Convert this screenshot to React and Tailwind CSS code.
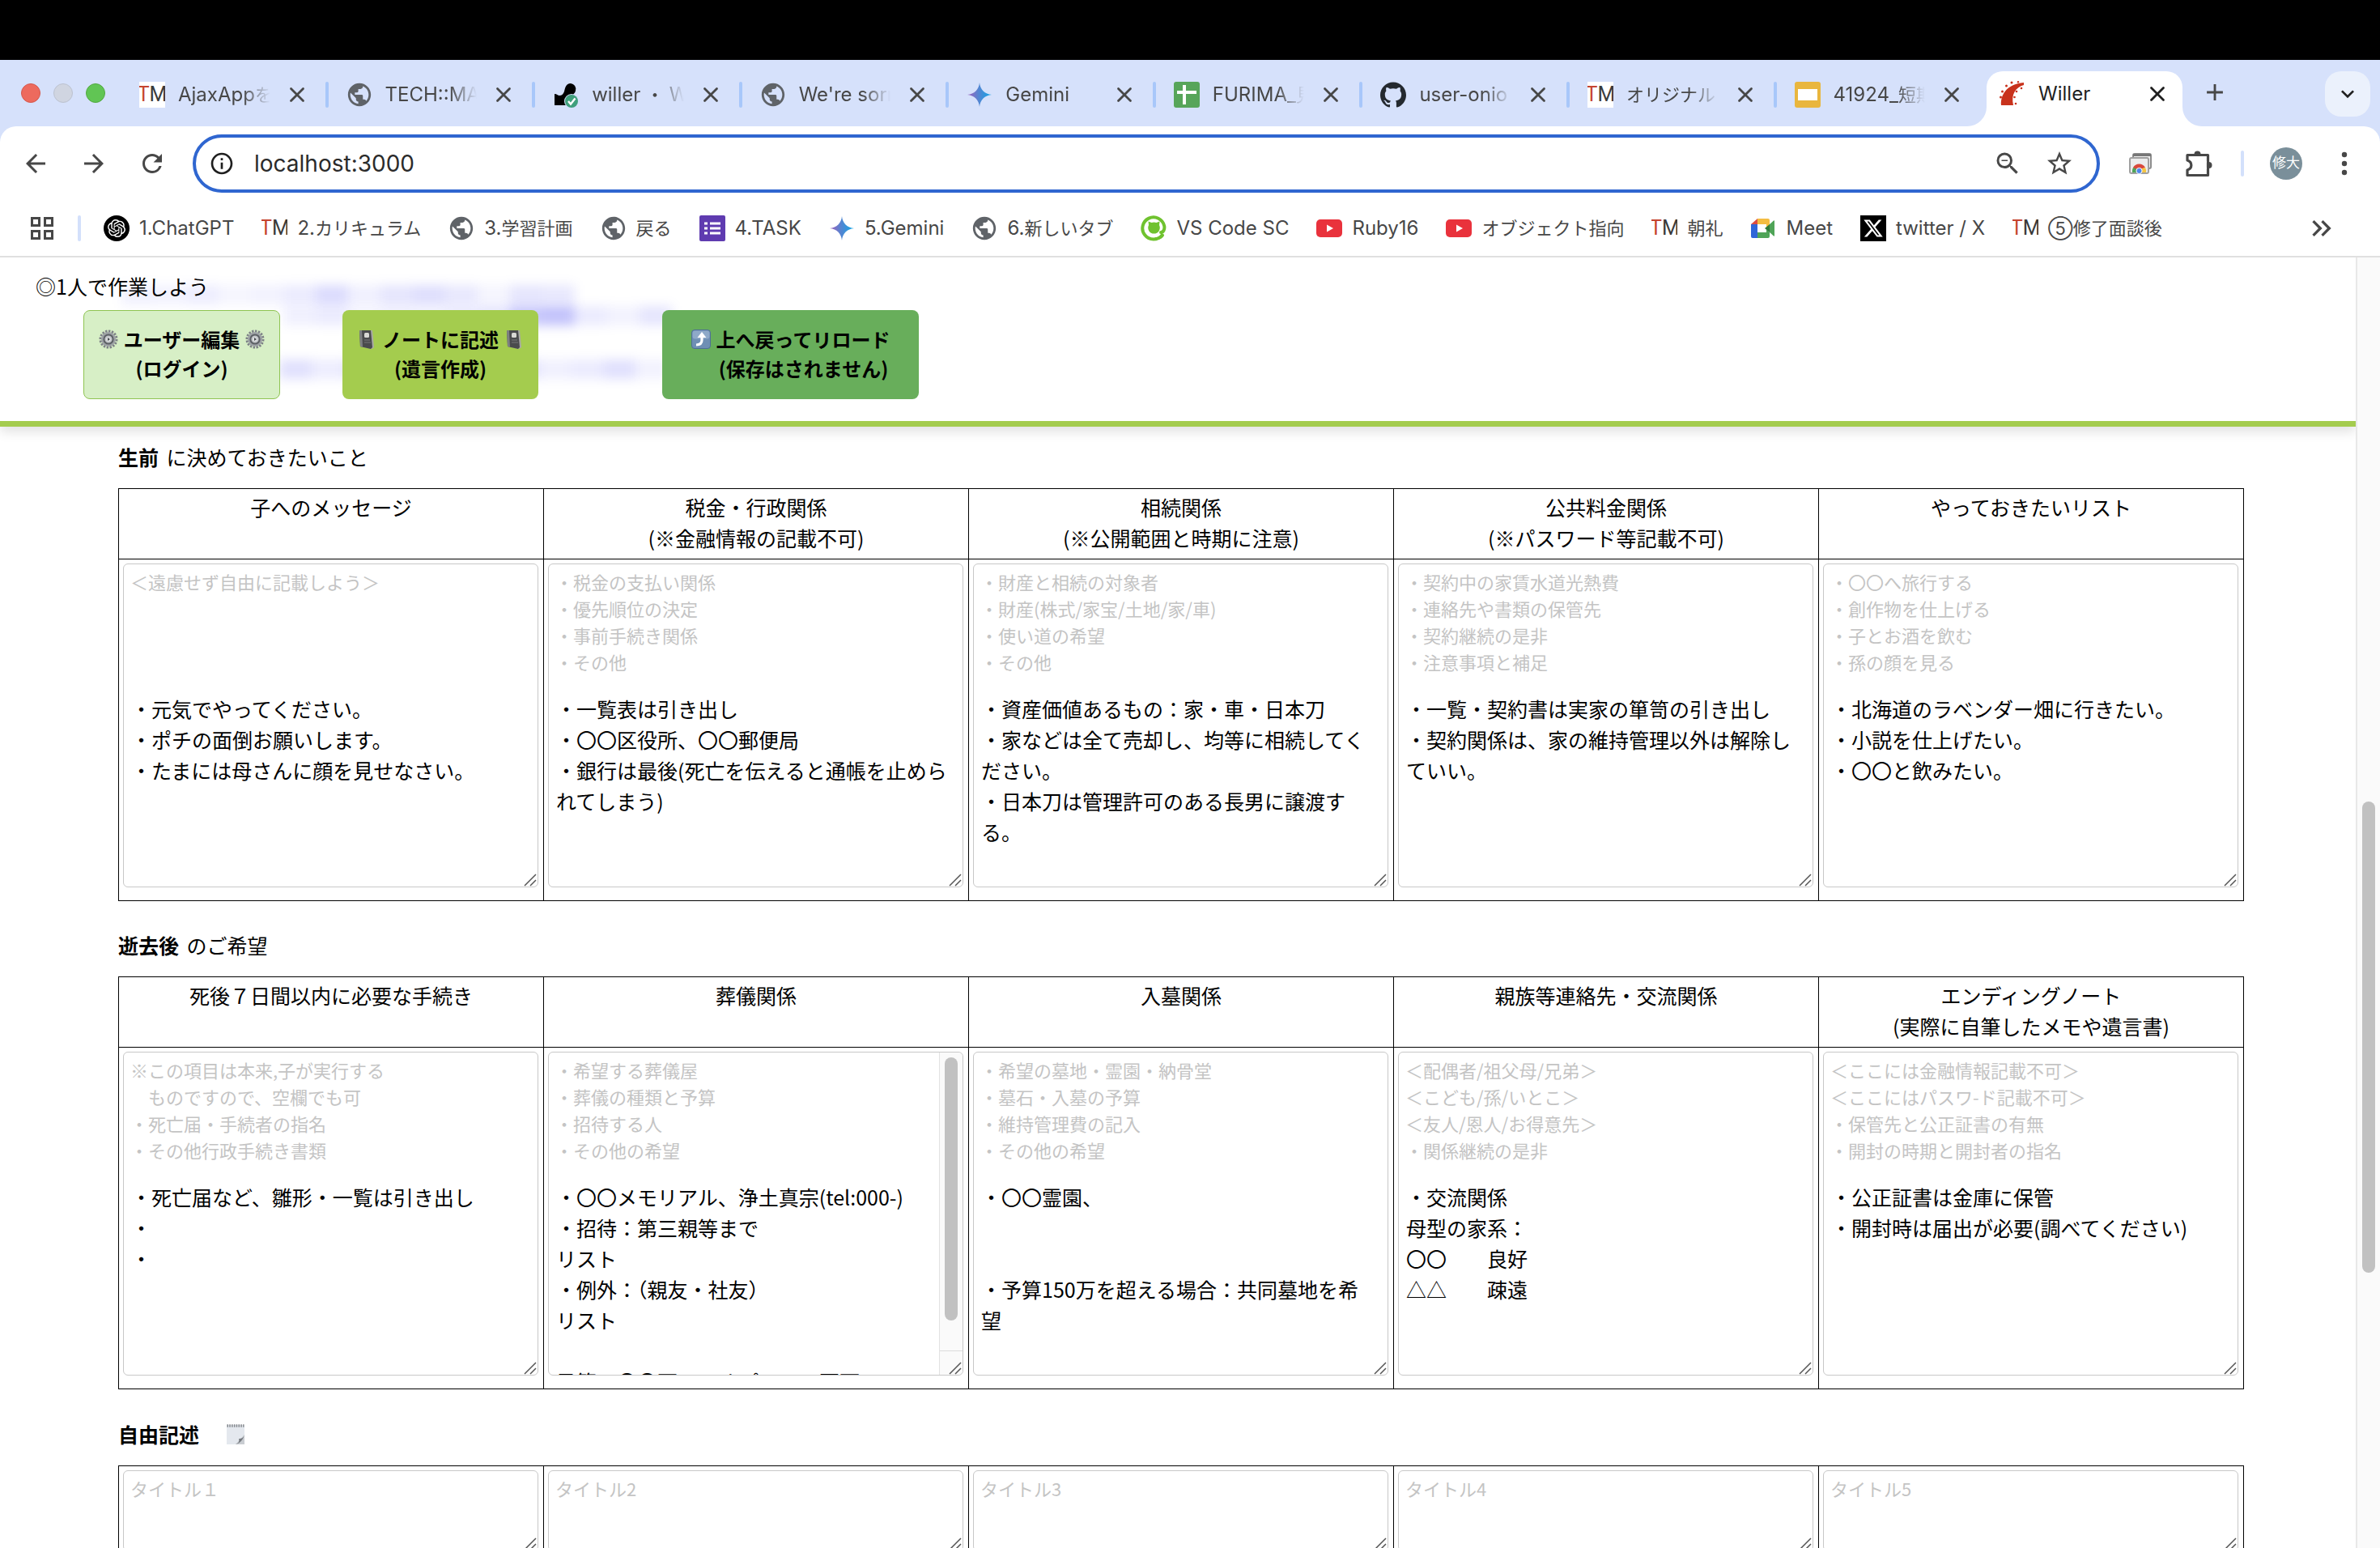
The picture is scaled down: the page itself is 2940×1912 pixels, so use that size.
import React from "react";
import {
  MdArrowBack,
  MdArrowForward,
  MdRefresh,
  MdOutlineInfo,
  MdStarBorder,
  MdZoomOut,
  MdPublic,
  MdAdd,
  MdKeyboardArrowDown,
  MdKeyboardDoubleArrowRight,
} from "react-icons/md";
import { SiOpenai, SiGithub } from "react-icons/si";
import { FaXTwitter } from "react-icons/fa6";
import { X } from "lucide-react";

/* ---------- site icons ---------- */

const Tm = ({ boxed }) => (
  <span
    className={
      "flex size-8 shrink-0 items-center justify-center overflow-hidden font-['Liberation_Sans_Narrow','Roboto',sans-serif] text-[25px] leading-8 " +
      (boxed ? "bg-white" : "")
    }
  >
    <span className="text-[#c5442f]">T</span>
    <span className="text-[#3a3a3a]">M</span>
  </span>
);

const Globe = () => <MdPublic className="size-[34px] shrink-0 text-[#5f6368]" />;

const Gemini = () => (
  <svg viewBox="0 0 32 32" className="size-8 shrink-0">
    <defs>
      <linearGradient id="gem" x1="0" y1="0" x2="1" y2="0">
        <stop offset="0.1" stopColor="#9168c0" />
        <stop offset="0.45" stopColor="#5684d1" />
        <stop offset="0.9" stopColor="#1ba1e3" />
      </linearGradient>
    </defs>
    <path
      fill="url(#gem)"
      d="M16 1C16.6 9.400 22.600 15.400 31 16C22.600 16.600 16.600 22.600 16 31C15.400 22.600 9.400 16.600 1 16C9.400 15.400 15.400 9.400 16 1Z"
    />
  </svg>
);

const Willer = () => (
  <svg viewBox="0 0 32 32" className="size-8 shrink-0">
    <path
      fill="#000"
      d="M22 2a7 7 0 0 1 6 9c-1 5-6 6-9 9-2 2-2 4-2 9H2V15c3 0 4 2 6 2 3 0 5-2 6-5 1-4 2-10 8-10Z"
    />
    <circle cx="23" cy="24" r="9" fill="#d6e1fb" />
    <circle cx="23" cy="24" r="8" fill="#3f9f7c" />
    <path d="M19 24l3 3.500 5.500-7" fill="none" stroke="#fff" strokeWidth="2.400" />
  </svg>
);

const Sheets = () => (
  <svg viewBox="0 0 32 32" className="size-8 shrink-0">
    <rect width="32" height="32" rx="3" fill="#57a55a" />
    <path d="M13 4v24M4 13h24" stroke="#fff" strokeWidth="4" />
  </svg>
);

const Slides = () => (
  <svg viewBox="0 0 32 32" className="size-8 shrink-0">
    <rect width="32" height="32" rx="3" fill="#e9b63e" />
    <rect x="4" y="9" width="24" height="14" fill="#fff" />
  </svg>
);

const Forms = () => (
  <svg viewBox="0 0 32 32" className="size-8 shrink-0">
    <rect width="32" height="32" rx="2" fill="#5f3bb0" />
    <path d="M6 10h4M13 10h13M6 16h4M13 16h13M6 22h4M13 22h13" stroke="#fff" strokeWidth="3" />
  </svg>
);

const Rails = () => (
  <svg viewBox="0 0 32 32" className="size-8 shrink-0">
    <path fill="#c8321c" d="M2 30C1 18 8 4 30 2v3C20 8 14 16 17 30Z" />
    <g fill="#c8321c">
      <circle cx="1.500" cy="20" r="1.500" />
      <circle cx="3.500" cy="13" r="1.500" />
      <circle cx="8.500" cy="6" r="1.500" />
      <circle cx="15" cy="2" r="1.500" />
      <circle cx="23" cy="1.200" r="1.200" />
      <circle cx="27" cy="9" r="1.300" />
      <circle cx="21" cy="13" r="1.300" />
      <circle cx="18.500" cy="20" r="1.300" />
      <circle cx="20" cy="28" r="1.300" />
    </g>
  </svg>
);

const Youtube = () => (
  <svg viewBox="0 0 32 32" className="size-8 shrink-0">
    <rect y="5" width="32" height="22" rx="5" fill="#e9323c" />
    <path d="M13 11.500v9l8-4.500Z" fill="#fff" />
  </svg>
);

const Qiita = () => (
  <svg viewBox="0 0 32 32" className="size-8 shrink-0">
    <path
      d="M26.500 24.500A13.600 13.600 0 1 1 29.200 13c.8 4-1 8-4.200 8"
      fill="none"
      stroke="#6fc22f"
      strokeWidth="4"
      strokeLinecap="round"
    />
    <path
      d="M9.500 7.500l4 1.500q3-1 6 0l4-1.500-.5 4.500a7.300 7.300 0 1 1-13 0Z"
      fill="#6fc22f"
    />
    <path d="M19 28.500q6 .5 8.500-4" fill="none" stroke="#6fc22f" strokeWidth="3" strokeLinecap="round" />
  </svg>
);

const Meet = () => (
  <svg viewBox="0 0 32 32" className="size-8 shrink-0">
    <path fill="#4fa458" d="M9 21h11v-4l4 4v5a2 2 0 0 1-2 2H9Z" />
    <path fill="#f4bd42" d="M9 4h13a2 2 0 0 1 2 2v7l-4 4v-6H9Z" />
    <path fill="#2f66d8" d="M1 11h8v17H3a2 2 0 0 1-2-2Z" />
    <path fill="#dd4c40" d="M9 4v7H1Z" />
    <path fill="#2f7a3a" d="M18 16l6-5v10Z" />
    <path fill="#4fa458" d="M24 11l5-4.500q1-.500 1 .500v18q0 1-1 .500L24 21Z" />
    <rect x="9" y="11" width="9" height="10" fill="#fff" />
  </svg>
);

const ChatGpt = () => (
  <span className="flex size-8 shrink-0 items-center justify-center rounded-full bg-black text-white">
    <SiOpenai className="size-[22px]" />
  </span>
);

const XLogo = () => (
  <span className="flex size-8 shrink-0 items-center justify-center bg-black text-white">
    <FaXTwitter className="size-[26px]" />
  </span>
);

const AppsGrid = () => (
  <svg viewBox="0 0 28 28" className="size-7" fill="none" stroke="#474747" strokeWidth="3">
    <rect x="1.500" y="1.500" width="9" height="9" />
    <rect x="17.500" y="1.500" width="9" height="9" />
    <rect x="1.500" y="17.500" width="9" height="9" />
    <rect x="17.500" y="17.500" width="9" height="9" />
  </svg>
);

const Windows = () => (
  <svg viewBox="0 0 32 32" className="size-8">
    <rect x="7" y="4" width="22" height="18" rx="2" fill="#f2f2f2" stroke="#8c8c8c" strokeWidth="2" />
    <path d="M7 5.500h22" stroke="#777" strokeWidth="3" />
    <rect x="3" y="9" width="23" height="19" rx="2" fill="#ececec" stroke="#a0a0a0" strokeWidth="2" />
    <path d="M6 27a8.500 8.500 0 0 1 4-8.500l4 5.500-2 3Z" fill="#4fa458" />
    <path d="M7 21a8.500 8.500 0 0 1 15 0l-8 3Z" fill="#d9483b" />
    <path d="M22 21a8.500 8.500 0 0 1 1 6h-7l-1-4Z" fill="#f4c542" />
    <circle cx="14.500" cy="25" r="3.600" fill="#4f86ec" stroke="#fff" strokeWidth="1" />
  </svg>
);

const Puzzle = () => (
  <svg viewBox="0 0 36 36" className="size-9 shrink-0" fill="none" stroke="#474747" strokeWidth="3.200" strokeLinejoin="round">
    <path d="M4 7.500H29.500V32.500H4V26C10.500 24 10.500 16 4 14Z" />
    <circle cx="16.500" cy="6.500" r="4" fill="#474747" stroke="none" />
    <circle cx="30.500" cy="20" r="4" fill="#474747" stroke="none" />
    <path d="M12 9.100h9v2h-9ZM25.900 15h2v10h-2Z" fill="#fff" stroke="none" />
  </svg>
);

const Dots = () => (
  <svg viewBox="0 0 40 40" className="size-10" fill="#474747">
    <circle cx="20" cy="9" r="3.200" />
    <circle cx="20" cy="20" r="3.200" />
    <circle cx="20" cy="31" r="3.200" />
  </svg>
);

/* ---------- page pictograms ---------- */

const Gear = () => (
  <svg viewBox="0 0 24 24" className="size-6 shrink-0">
    <circle cx="12" cy="12" r="10" fill="none" stroke="#7d8186" strokeWidth="3" strokeDasharray="2.400 1.500" />
    <circle cx="12" cy="12" r="9" fill="#9da1a5" />
    <circle cx="12" cy="12" r="5.600" fill="#c3c6c9" stroke="#5c6065" strokeWidth="2" />
    <circle cx="12" cy="12" r="2.600" fill="#e3e5e7" />
    <path d="M11 10l3 2-3 2Z" fill="#44484c" />
  </svg>
);

const Notebook = () => (
  <svg viewBox="0 0 24 24" className="size-6 shrink-0">
    <path d="M5 1h14l2 21-3 2L5 21Z" fill="#a9a9a6" />
    <path d="M3 1h14l2 21-2 2-13-3Z" fill="#4a4b4d" />
    <path d="M3 1h3l1 20.500-3-.5Z" fill="#7e8082" />
    <rect x="9" y="4" width="6" height="6" rx="1.500" fill="#d8d8d4" />
    <path d="M9 13h7M9 16h8" stroke="#77797b" strokeWidth="1" />
  </svg>
);

const TurnUp = () => (
  <svg viewBox="0 0 24 24" className="size-6 shrink-0">
    <rect x="0.500" y="0.500" width="23" height="23" rx="3.500" fill="#6f8fb4" stroke="#4e6f96" />
    <rect x="1.500" y="1.500" width="21" height="10" rx="3" fill="#8ea9c8" />
    <path d="M6 19c5 0 7-2 7-6V9" fill="none" stroke="#fff" strokeWidth="3.200" />
    <path d="M13 3l5.500 7h-11Z" fill="#fff" />
  </svg>
);

const Memo = () => (
  <svg viewBox="0 0 24 26" className="h-[26px] w-6 shrink-0">
    <path d="M1 2h22v24H1Z" fill="#e4e8ee" />
    <path d="M23 14v12H12Z" fill="#c9cdd2" />
    <path d="M23 14c-1 4-4 5-7 5 1 3 0 6-4 7 5-1 9-5 11-12Z" fill="#777b80" />
    <path d="M1.500 3h21" stroke="#85898e" strokeWidth="3.500" strokeDasharray="1.500 1.300" />
  </svg>
);

const Grip = () => (
  <svg
    viewBox="0 0 16 16"
    className="pointer-events-none absolute right-0.5 bottom-px size-4"
    stroke="#555"
    strokeWidth="1.500"
  >
    <path d="M1 15L15 1M8 15L15 8" />
  </svg>
);

/* ---------- data ---------- */

const tabs = [
  { icon: <Tm boxed />, title: "AjaxAppを" },
  { icon: <Globe />, title: "TECH::MA" },
  { icon: <Willer />, title: "willer ・ W" },
  { icon: <Globe />, title: "We're sorr" },
  { icon: <Gemini />, title: "Gemini" },
  { icon: <Sheets />, title: "FURIMA_見" },
  { icon: <SiGithub className="size-8 shrink-0 text-[#24292f]" />, title: "user-onio" },
  { icon: <Tm boxed />, title: "オリジナル" },
  { icon: <Slides />, title: "41924_短期" },
];

const bookmarks = [
  { icon: <ChatGpt />, title: "1.ChatGPT" },
  { icon: <Tm />, title: "2.カリキュラム" },
  { icon: <Globe />, title: "3.学習計画" },
  { icon: <Globe />, title: "戻る" },
  { icon: <Forms />, title: "4.TASK" },
  { icon: <Gemini />, title: "5.Gemini" },
  { icon: <Globe />, title: "6.新しいタブ" },
  { icon: <Qiita />, title: "VS Code SC" },
  { icon: <Youtube />, title: "Ruby16" },
  { icon: <Youtube />, title: "オブジェクト指向" },
  { icon: <Tm />, title: "朝礼" },
  { icon: <Meet />, title: "Meet" },
  { icon: <XLogo />, title: "twitter / X" },
  { icon: <Tm />, title: "⑤修了面談後" },
];

const before = [
  {
    head: ["子へのメッセージ"],
    hint: "＜遠慮せず自由に記載しよう＞",
    text: "・元気でやってください。\n・ポチの面倒お願いします。\n・たまには母さんに顔を見せなさい。",
  },
  {
    head: ["税金・行政関係", "(※金融情報の記載不可)"],
    hint: "・税金の支払い関係\n・優先順位の決定\n・事前手続き関係\n・その他",
    text: "・一覧表は引き出し\n・〇〇区役所、〇〇郵便局\n・銀行は最後(死亡を伝えると通帳を止められてしまう)",
  },
  {
    head: ["相続関係", "(※公開範囲と時期に注意)"],
    hint: "・財産と相続の対象者\n・財産(株式/家宝/土地/家/車)\n・使い道の希望\n・その他",
    text: "・資産価値あるもの：家・車・日本刀\n・家などは全て売却し、均等に相続してください。\n・日本刀は管理許可のある長男に譲渡する。",
  },
  {
    head: ["公共料金関係", "(※パスワード等記載不可)"],
    hint: "・契約中の家賃水道光熱費\n・連絡先や書類の保管先\n・契約継続の是非\n・注意事項と補足",
    text: "・一覧・契約書は実家の箪笥の引き出し\n・契約関係は、家の維持管理以外は解除していい。",
  },
  {
    head: ["やっておきたいリスト"],
    hint: "・〇〇へ旅行する\n・創作物を仕上げる\n・子とお酒を飲む\n・孫の顔を見る",
    text: "・北海道のラベンダー畑に行きたい。\n・小説を仕上げたい。\n・〇〇と飲みたい。",
  },
];

const after = [
  {
    head: ["死後７日間以内に必要な手続き"],
    hint: "※この項目は本来,子が実行する\n　ものですので、空欄でも可\n・死亡届・手続者の指名\n・その他行政手続き書類",
    text: "・死亡届など、雛形・一覧は引き出し\n・\n・",
  },
  {
    head: ["葬儀関係"],
    hint: "・希望する葬儀屋\n・葬儀の種類と予算\n・招待する人\n・その他の希望",
    text: "・〇〇メモリアル、浄土真宗(tel:000-)\n・招待：第三親等まで\nリスト\n・例外：（親友・社友）\nリスト\n\n予算：〇〇万〜、オプション不可",
    scroll: true,
  },
  {
    head: ["入墓関係"],
    hint: "・希望の墓地・霊園・納骨堂\n・墓石・入墓の予算\n・維持管理費の記入\n・その他の希望",
    text: "・〇〇霊園、\n\n\n・予算150万を超える場合：共同墓地を希望",
  },
  {
    head: ["親族等連絡先・交流関係"],
    hint: "＜配偶者/祖父母/兄弟＞\n＜こども/孫/いとこ＞\n＜友人/恩人/お得意先＞\n・関係継続の是非",
    text: "・交流関係\n母型の家系：\n〇〇　　良好\n△△　　疎遠",
  },
  {
    head: ["エンディングノート", "(実際に自筆したメモや遺言書)"],
    hint: "＜ここには金融情報記載不可＞\n＜ここにはパスワ-ド記載不可＞\n・保管先と公正証書の有無\n・開封の時期と開封者の指名",
    text: "・公正証書は金庫に保管\n・開封時は届出が必要(調べてください)",
  },
];

const free = ["タイトル１", "タイトル2", "タイトル3", "タイトル4", "タイトル5"];

/* Strength of each blurred patch, one row for each line behind the header. */
const haze = [
  { row: "mt-[34px] ml-[150px]", cells: [6, 5, 7, 4, 5, 8, 14, 6, 10, 13, 9, 4, 10, 9] },
  { row: "mt-[2px] ml-[350px]", cells: [6, 8, 4, 6, 5, 8, 10, 22, 24, 8, 5, 10] },
  { row: "mt-[42px] ml-[345px]", cells: [12, 7, 11, 9, 6, 10, 8, 12, 6, 8, 12, 5] },
];

/* ---------- browser frame ---------- */

/* Japanese runs in the browser's own labels are set a step smaller than Latin ones. */
function Label({ text }) {
  const runs = text.match(/[\u0000-\u00ff]+|[^\u0000-\u00ff]+/g);
  return (
    <span>
      {runs.map((r, i) =>
        r.charCodeAt(0) > 255 ? (
          <span key={i} className="text-[22px]">
            {r}
          </span>
        ) : (
          r
        ),
      )}
    </span>
  );
}

function TabStrip() {
  return (
    <div className="flex h-[82px] items-end bg-[#d6e1fb] text-[24px] text-[#474747]">
      <div className="flex h-full w-[150px] shrink-0 items-center gap-4 pl-[26px]">
        <button aria-label="閉じる" className="size-6 rounded-full border border-[#d5574b] bg-[#ed6a5e]" />
        <button aria-label="しまう" className="size-6 rounded-full border border-[#bcc2d0] bg-[#d0d5e1]" />
        <button aria-label="拡大" className="size-6 rounded-full border border-[#52a93f] bg-[#61c554]" />
      </div>
      {tabs.map((t, i) => (
        <div key={i} className="flex h-full min-w-0 flex-1 items-center pt-1 pl-[22px]">
          <div className="flex w-8 shrink-0 justify-center">{t.icon}</div>
          <button className="ml-4 min-w-0 flex-1 overflow-hidden text-left leading-8 whitespace-nowrap [mask-image:linear-gradient(to_right,black_70%,transparent)]">
            <Label text={t.title} />
          </button>
          <button aria-label="タブを閉じる" className="mr-5 ml-[18px]">
            <X className="size-[30px]" strokeWidth={2.2} />
          </button>
          <span
            className={
              "h-8 w-1 shrink-0 rounded-full " + (i < tabs.length - 1 ? "bg-[#a8c7fa]" : "")
            }
          />
        </div>
      ))}
      <div className="relative ml-1 flex h-[68px] w-[242px] shrink-0 items-center rounded-t-[20px] bg-white pb-3 pl-4 text-[#1f1f1f]">
        <svg viewBox="0 0 24 24" className="absolute bottom-0 -left-6 size-6" fill="#fff">
          <path d="M24 0v24H0A24 24 0 0 0 24 0Z" />
        </svg>
        <svg viewBox="0 0 24 24" className="absolute -right-6 bottom-0 size-6" fill="#fff">
          <path d="M0 0v24h24A24 24 0 0 1 0 0Z" />
        </svg>
        <Rails />
        <button className="ml-4 flex-1 text-left leading-8">Willer</button>
        <button aria-label="タブを閉じる" className="mr-4">
          <X className="size-[30px]" strokeWidth={2.2} />
        </button>
      </div>
      <button aria-label="新しいタブ" className="flex h-[68px] w-20 shrink-0 items-center justify-center pb-4">
        <MdAdd className="size-[34px]" />
      </button>
      <button
        aria-label="タブを検索"
        className="mr-3 mb-3 ml-24 flex size-14 shrink-0 items-center justify-center rounded-[20px] bg-[#ebf1fc] text-[#1f1f1f]"
      >
        <MdKeyboardArrowDown className="size-8" />
      </button>
    </div>
  );
}

function Toolbar() {
  return (
    <div className="bg-[#d6e1fb]">
      <div className="flex h-[92px] items-center rounded-t-[20px] bg-white px-6 text-[#474747]">
        <div className="flex gap-8">
          <button aria-label="戻る" className="flex size-10 items-center justify-center">
            <MdArrowBack className="size-9" />
          </button>
          <button aria-label="進む" className="flex size-10 items-center justify-center">
            <MdArrowForward className="size-9" />
          </button>
          <button aria-label="再読み込み" className="flex size-10 items-center justify-center">
            <MdRefresh className="size-9" />
          </button>
        </div>
        <div className="mx-[30px] flex h-[72px] flex-1 items-center rounded-full border-4 border-[#2f66d0] pr-7 pl-4">
          <MdOutlineInfo className="size-8 shrink-0 text-[#1f1f1f]" />
          <input
            aria-label="アドレス"
            defaultValue="localhost:3000"
            className="ml-6 min-w-0 flex-1 bg-transparent text-[28px] leading-10 text-[#2b2b2b] outline-none"
          />
          <div className="flex gap-7">
            <button aria-label="ズーム">
              <MdZoomOut className="size-9" />
            </button>
            <button aria-label="ブックマークに追加">
              <MdStarBorder className="size-9" />
            </button>
          </div>
        </div>
        <div className="flex items-center gap-8">
          <button aria-label="ウィンドウ" className="flex size-10 items-center justify-center">
            <Windows />
          </button>
          <button aria-label="拡張機能" className="flex size-10 items-center justify-center">
            <Puzzle />
          </button>
          <span className="h-8 w-1 rounded-full bg-[#d3e0fb]" />
          <button className="flex size-10 items-center justify-center rounded-full bg-[#7a8f9a] text-[17px] whitespace-nowrap text-white">
            修大
          </button>
          <button aria-label="メニュー" className="size-10">
            <Dots />
          </button>
        </div>
      </div>
    </div>
  );
}

function Bookmarks() {
  return (
    <nav className="flex h-[70px] items-center border-b-2 border-[#e0e0e0] bg-white pr-[52px] pl-[38px] text-[24px] text-[#474747]">
      <button aria-label="アプリ">
        <AppsGrid />
      </button>
      <span className="mr-7 ml-[30px] h-8 w-1 rounded-full bg-[#d3e0fb]" />
      <div className="flex flex-1 gap-[34px]">
        {bookmarks.map((b, i) => (
          <a key={i} href="#top" className="flex items-center gap-3 leading-8 whitespace-nowrap">
            <span className="flex w-8 justify-center">{b.icon}</span>
            <Label text={b.title} />
          </a>
        ))}
      </div>
      <button aria-label="他のブックマーク">
        <MdKeyboardDoubleArrowRight className="size-10" />
      </button>
    </nav>
  );
}

/* ---------- page ---------- */

function PageHeader() {
  return (
    <header className="relative z-10 border-b-[7px] border-[#a4cc4e] bg-white pb-[27px] shadow-[0_6px_14px_rgba(0,0,0,0.12)]">
      <div className="pointer-events-none absolute inset-0 flow-root overflow-hidden">
        {haze.map((line, i) => (
          <div key={i} className={"flex blur-[7px] " + line.row}>
            {line.cells.map((c, j) => (
              <span key={j} className="h-6 w-10 bg-[#0000ee]" style={{ opacity: c / 100 }} />
            ))}
          </div>
        ))}
      </div>
      <p className="relative pt-4 pl-11 leading-[38px]">◎1人で作業しよう</p>
      <div className="relative mt-[11px] flex pl-[103px] text-[24px] leading-9 font-bold">
        <button className="h-[110px] w-[243px] rounded-lg border border-[#8fc452] bg-[#d7efc6] pb-0.5">
          <span className="flex items-center justify-center gap-[7px]">
            <Gear />
            ユーザー編集
            <Gear />
          </span>
          (ログイン)
        </button>
        <button className="ml-[77px] h-[110px] w-[242px] rounded-lg bg-[#a4cc4e] pb-0.5">
          <span className="flex items-center justify-center gap-[7px]">
            <Notebook />
            ノートに記述
            <Notebook />
          </span>
          (遺言作成)
        </button>
        <button className="ml-[153px] h-[110px] w-[317px] rounded-lg bg-[#68ae5b] pb-0.5">
          <span className="flex items-center justify-center gap-[7px]">
            <TurnUp />
            上へ戻ってリロード
          </span>
          <span className="pl-8">(保存はされません)</span>
        </button>
      </div>
    </header>
  );
}

function NoteField({ id, hint, text, short, scroll }) {
  return (
    <div className="relative">
      <label
        htmlFor={id}
        className="pointer-events-none absolute top-1.5 left-[9px] text-[22px] leading-[33px] whitespace-pre text-[#c4c4c4]"
      >
        {hint}
      </label>
      <textarea
        id={id}
        defaultValue={text}
        className={
          "block w-full resize-none overflow-hidden rounded-md border border-[#c8c8c8] bg-transparent pr-[14px] pl-[9px] leading-[38px] outline-none " +
          (short ? "h-[100px] pt-2" : "h-[400px] pt-[159px]")
        }
      />
      {scroll && (
        <div className="absolute top-px right-px bottom-px flex w-[29px] flex-col items-center rounded-r-md border-l border-[#e2e2e2] bg-[#fafafa] pt-1.5">
          <div className="h-[325px] w-4 rounded-full bg-[#c1c1c1]" />
          <div className="mt-auto h-[30px] w-full border-t border-[#dcdcdc]" />
        </div>
      )}
      <Grip />
    </div>
  );
}

function NoteTable({ name, items }) {
  return (
    <table className="w-full table-fixed border-collapse">
      <thead>
        <tr>
          {items.map((c, i) => (
            <th key={i} className="border border-black pt-[3px] pb-[7px] align-top leading-[38px] font-normal">
              {c.head.map((h) => (
                <div key={h}>{h}</div>
              ))}
            </th>
          ))}
        </tr>
      </thead>
      <tbody>
        <tr>
          {items.map((c, i) => (
            <td key={i} className="border border-black pt-[5px] pr-1.5 pb-4 pl-[5px]">
              <NoteField id={name + i} hint={c.hint} text={c.text} scroll={c.scroll} />
            </td>
          ))}
        </tr>
      </tbody>
    </table>
  );
}

export default function App() {
  return (
    <div lang="ja" className="flex h-screen flex-col overflow-hidden bg-white">
      <div className="h-[74px] shrink-0 bg-black" />
      <div className="shrink-0 font-['Inter','Noto_Sans_CJK_JP',sans-serif]">
        <TabStrip />
        <Toolbar />
        <Bookmarks />
      </div>
      <div className="flex min-h-0 flex-1 font-['Noto_Sans_CJK_JP',sans-serif] text-[25px] text-black">
        <div className="min-w-0 flex-1 overflow-hidden">
          <PageHeader />
          <main className="pr-[138px] pl-[146px]">
            <h2 className="mt-[18px] mb-5 leading-[38px]">
              <b className="mr-1">生前</b> に決めておきたいこと
            </h2>
            <NoteTable name="before" items={before} />
            <h2 className="mt-[35px] mb-5 leading-[38px]">
              <b className="mr-1">逝去後</b> のご希望
            </h2>
            <NoteTable name="after" items={after} />
            <h2 className="mt-9 mb-5 flex items-center leading-[38px]">
              <b>自由記述　</b>
              <span className="pl-2">
                <Memo />
              </span>
            </h2>
            <table className="w-full table-fixed border-collapse">
              <tbody>
                <tr>
                  {free.map((t, i) => (
                    <td key={t} className="border border-black pt-[5px] pr-1.5 pb-4 pl-[5px]">
                      <NoteField id={"free" + i} hint={t} text="" short />
                    </td>
                  ))}
                </tr>
              </tbody>
            </table>
          </main>
        </div>
        <div className="w-[30px] shrink-0 border-l-2 border-[#e8e8e8] bg-[#fafafa] pl-1.5">
          <div className="mt-[672px] h-[582px] w-4 rounded-full bg-[#c1c1c1]" />
        </div>
      </div>
    </div>
  );
}
